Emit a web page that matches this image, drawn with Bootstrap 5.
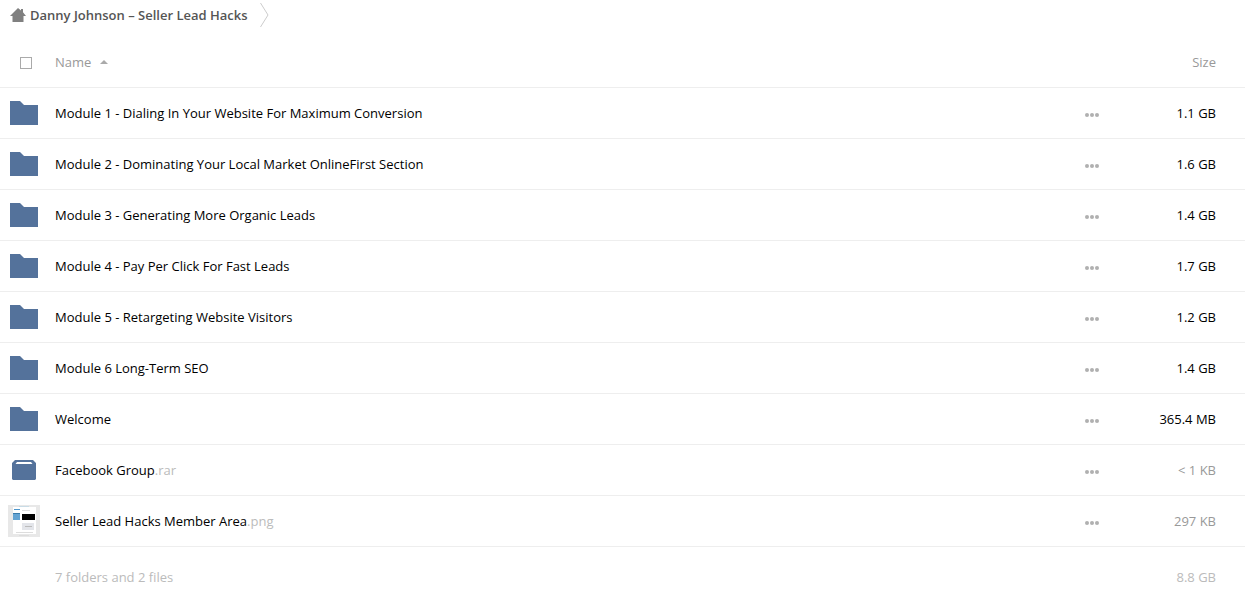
<!DOCTYPE html>
<html lang="en">
<head>
<meta charset="utf-8">
<meta name="viewport" content="width=device-width, initial-scale=1">
<title>Danny Johnson – Seller Lead Hacks</title>
<link href="https://cdn.jsdelivr.net/npm/bootstrap@5.3.0/dist/css/bootstrap.min.css" rel="stylesheet">
<style>
body { font-family: "Open Sans", sans-serif; font-size: 13px; line-height: 20px; color: #000; background: #fff; }
.crumbs { height: 36px; padding: 0 10px 6px; }
.crumbs a { color: #555; font-weight: 600; gap: 4px; }
.crumbs .chevron { margin-left: 12px; }
.files { --bs-table-bg: transparent; table-layout: fixed; border-color: #eee; }
.files > :not(caption) > * > * { padding: 0; height: 51px; border-bottom: 1px solid #eee; color: #000; vertical-align: middle; }
.files .pick { width: 55px; }
.files .more { width: 60px; }
.files .size { width: 100px; padding-right: 29px; text-align: right; }
.files > thead > tr > th { font-weight: 400; color: #999; padding-top: 2px; }
.files > thead > tr > .pick { padding-top: 4px; }
.files thead button { color: #999; gap: 9px; }
.files > tfoot > tr > td { border-bottom: 0; height: 61px; color: #bbb; }
.files > tbody > tr > .muted { color: #999; }
.files > tbody > tr > .icon-cell { padding-left: 8px; }
.files td svg, .files th svg { display: block; }
.files a { color: #000; }
.files a .ext { color: #bbb; }
.tick { appearance: none; display: block; width: 12px; height: 12px; margin: 0 0 0 20px; border: 1px solid #aaa; background: #fff; }
.tick:checked { background: #54729b; }
.dots { display: block; padding: 4px 0 0; }
</style>
</head>
<body>
<svg class="d-none" aria-hidden="true">
  <symbol id="folder" viewBox="0 0 32 32"><path fill="#54729b" d="M2 4h10l4 4h14v20H2z"/></symbol>
  <symbol id="archive" viewBox="0 0 32 32"><path fill="#54729b" fill-rule="evenodd" d="M7 6h18l3 3v16l-1 1H5l-1-1V9zM9 8L7.500 10h17L23 8z"/></symbol>
  <symbol id="dots" viewBox="0 0 14 4"><g fill="#b0b0b0"><circle cx="2" cy="2" r="2"/><circle cx="7" cy="2" r="2"/><circle cx="12" cy="2" r="2"/></g></symbol>
</svg>

<nav class="crumbs d-flex align-items-center" aria-label="Breadcrumb">
  <a href="#" class="d-flex align-items-center text-decoration-none">
    <svg width="16" height="14" viewBox="0 0 16 14" aria-hidden="true"><path fill="#808080" d="M8 0l3 2.500V1h2v3.300L16 8h-2.500v6h-11V8H0z"/></svg>
    <span>Danny Johnson – Seller Lead Hacks</span>
  </a>
  <svg class="chevron" width="9" height="24" viewBox="0 0 9 24" fill="none" stroke="#ccc" aria-hidden="true"><path d="M.5 0l7.500 12L.5 24"/></svg>
</nav>

<main>
<table class="table files w-100 mb-0">
  <thead>
    <tr>
      <th class="pick" scope="col"><input type="checkbox" class="tick" aria-label="Select all"></th>
      <th scope="col"><button type="button" class="d-flex align-items-center border-0 bg-transparent p-0">Name
        <svg width="8" height="4" viewBox="0 0 8 4" aria-hidden="true"><path fill="#aaa" d="M0 4l4-4 4 4z"/></svg></button></th>
      <th class="more" scope="col" aria-label="Actions"></th>
      <th class="size" scope="col">Size</th>
    </tr>
  </thead>
  <tbody>
    <tr><td class="icon-cell"><svg width="32" height="32" aria-hidden="true"><use href="#folder"/></svg></td><td><a href="#" class="text-decoration-none">Module 1 - Dialing In Your Website For Maximum Conversion</a></td><td><button type="button" class="dots border-0 bg-transparent" aria-label="More"><svg width="14" height="4"><use href="#dots"/></svg></button></td><td class="size">1.1 GB</td></tr>
    <tr><td class="icon-cell"><svg width="32" height="32" aria-hidden="true"><use href="#folder"/></svg></td><td><a href="#" class="text-decoration-none">Module 2 - Dominating Your Local Market OnlineFirst Section</a></td><td><button type="button" class="dots border-0 bg-transparent" aria-label="More"><svg width="14" height="4"><use href="#dots"/></svg></button></td><td class="size">1.6 GB</td></tr>
    <tr><td class="icon-cell"><svg width="32" height="32" aria-hidden="true"><use href="#folder"/></svg></td><td><a href="#" class="text-decoration-none">Module 3 - Generating More Organic Leads</a></td><td><button type="button" class="dots border-0 bg-transparent" aria-label="More"><svg width="14" height="4"><use href="#dots"/></svg></button></td><td class="size">1.4 GB</td></tr>
    <tr><td class="icon-cell"><svg width="32" height="32" aria-hidden="true"><use href="#folder"/></svg></td><td><a href="#" class="text-decoration-none">Module 4 - Pay Per Click For Fast Leads</a></td><td><button type="button" class="dots border-0 bg-transparent" aria-label="More"><svg width="14" height="4"><use href="#dots"/></svg></button></td><td class="size">1.7 GB</td></tr>
    <tr><td class="icon-cell"><svg width="32" height="32" aria-hidden="true"><use href="#folder"/></svg></td><td><a href="#" class="text-decoration-none">Module 5 - Retargeting Website Visitors</a></td><td><button type="button" class="dots border-0 bg-transparent" aria-label="More"><svg width="14" height="4"><use href="#dots"/></svg></button></td><td class="size">1.2 GB</td></tr>
    <tr><td class="icon-cell"><svg width="32" height="32" aria-hidden="true"><use href="#folder"/></svg></td><td><a href="#" class="text-decoration-none">Module 6 Long-Term SEO</a></td><td><button type="button" class="dots border-0 bg-transparent" aria-label="More"><svg width="14" height="4"><use href="#dots"/></svg></button></td><td class="size">1.4 GB</td></tr>
    <tr><td class="icon-cell"><svg width="32" height="32" aria-hidden="true"><use href="#folder"/></svg></td><td><a href="#" class="text-decoration-none">Welcome</a></td><td><button type="button" class="dots border-0 bg-transparent" aria-label="More"><svg width="14" height="4"><use href="#dots"/></svg></button></td><td class="size">365.4 MB</td></tr>
    <tr><td class="icon-cell"><svg width="32" height="32" aria-hidden="true"><use href="#archive"/></svg></td><td><a href="#" class="text-decoration-none">Facebook Group<span class="ext">.rar</span></a></td><td><button type="button" class="dots border-0 bg-transparent" aria-label="More"><svg width="14" height="4"><use href="#dots"/></svg></button></td><td class="size muted">&lt; 1 KB</td></tr>
    <tr><td class="icon-cell">
      <svg width="32" height="32" viewBox="0 0 32 32" aria-hidden="true">
        <path fill="#e8e8e8" d="M0 0h32v32H0z"/><path fill="#c9dce6" d="M11 1h10v1H11z"/>
        <path fill="#fff" d="M5 2h23v27H5z"/><path fill="#4d96cc" d="M6 4h6v1H6z"/><path fill="#ddd" d="M14 5h8v1h-8zM18 14h5v1h-5zM8 27h17v1H8zM11 30h10v1H11z"/>
        <path fill="#64a3d2" d="M5 8h7v7H5z"/><path fill="#397aaa" d="M5 8h7v1H5z"/>
        <path fill="#000" d="M14 9h13v6H14z"/><path fill="#e3e5ea" d="M14 18h12v7H14z"/><path fill="#bbb" d="M17 21h7v1h-7z"/>
      </svg></td><td><a href="#" class="text-decoration-none">Seller Lead Hacks Member Area<span class="ext">.png</span></a></td><td><button type="button" class="dots border-0 bg-transparent" aria-label="More"><svg width="14" height="4"><use href="#dots"/></svg></button></td><td class="size muted">297 KB</td></tr>
  </tbody>
  <tfoot>
    <tr><td></td><td>7 folders and 2 files</td><td></td><td class="size">8.8 GB</td></tr>
  </tfoot>
</table>
</main>
<script src="https://cdn.jsdelivr.net/npm/bootstrap@5.3.0/dist/js/bootstrap.bundle.min.js"></script>
</body>
</html>
